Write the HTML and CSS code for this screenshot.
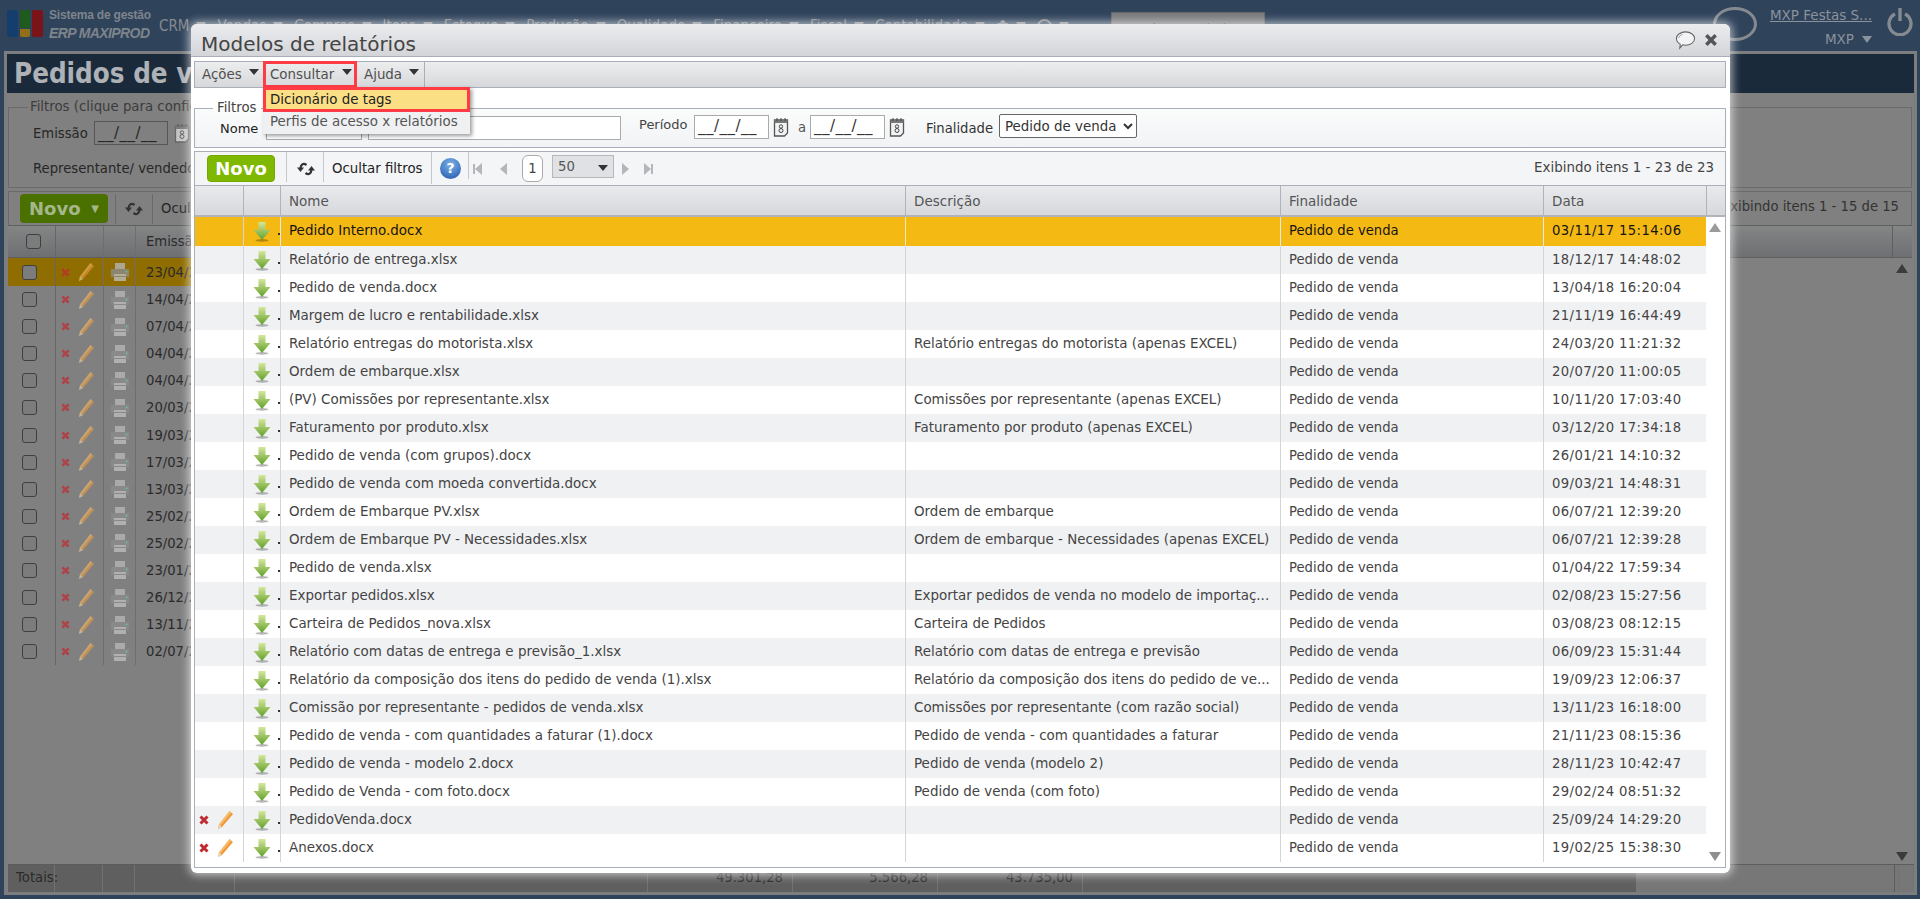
FILE: index.html
```html
<!DOCTYPE html>
<html lang="pt-BR">
<head>
<meta charset="utf-8">
<title>Modelos de relatórios</title>
<link rel="stylesheet" href="styles.css">
</head>
<body>
<svg class="defs" width="0" height="0" aria-hidden="true">
  <defs>
    <linearGradient id="ga" x1="0" y1="0" x2="0" y2="1"><stop offset="0" stop-color="#d5e79a"/><stop offset="1" stop-color="#62a02a"/></linearGradient>
    <symbol id="down" viewBox="0 0 18 20"><ellipse cx="9" cy="18.400" rx="6.500" ry="1.300" fill="#000" opacity=".28"/><path d="M5.500 0h7v8h5L9 18 .5 8h5z" fill="url(#ga)"/></symbol>
    <symbol id="del" viewBox="0 0 10 10"><path d="M1.500 1.500l7 7M8.500 1.500l-7 7" stroke="#c22a33" stroke-width="3" fill="none"/></symbol>
    <symbol id="pen" viewBox="0 0 18 20"><path d="M13.500 1l3.500 3L6 17l-4 2 1-4.500z" fill="#ee9a3a"/><path d="M13.500 1l1.700 1.500L4 16l-1-1.500z" fill="#f7bd6c"/><path d="M3 14.500L2 19l4-2z" fill="#e8d8b8"/></symbol>
    <symbol id="printer" viewBox="0 0 20 20"><path d="M5 1h10v6H5z" fill="#b5b5b5"/><path d="M1 7h18v8H1z" fill="#8c8c8c"/><path d="M4 12h12v7H4z" fill="#bdbdbd"/><path d="M4 14h12v1H4z" fill="#8c8c8c"/><circle cx="16.500" cy="9.500" r="1" fill="#6c9"/></symbol>
    <symbol id="sync" viewBox="0 0 18 16"><path d="M9.500 4C6.500 1.800 4 3.200 3.500 7" fill="none" stroke="#333" stroke-width="2.200"/><path d="M0 6.500h7L3.500 11z" fill="#333"/><path d="M8.500 12c3 2.200 5.500.8 6-3" fill="none" stroke="#333" stroke-width="2.200"/><path d="M11 9.500h7L14.500 5z" fill="#333"/></symbol>
    <symbol id="cal" viewBox="0 0 16 20"><path d="M1.500 3h13v13l-3 3h-10z" fill="#f2f3f4" stroke="#555" stroke-width="1.300"/><path d="M1.500 3h13v3h-13z" fill="#777"/><path d="M4 1v3M8 1v3M12 1v3" stroke="#444"/><circle cx="8" cy="9.500" r="1.700" fill="none" stroke="#444"/><circle cx="8" cy="13.500" r="2" fill="none" stroke="#444"/></symbol>
  </defs>
</svg>

<header class="topbar">
  <div class="logo">
    <span class="logo-bar navy"></span>
    <span class="logo-mid"><span class="logo-green"></span><span class="logo-yellow"></span></span>
    <span class="logo-bar red"></span>
  </div>
  <div class="brand"><span class="brand-a">Sistema de gestão</span><span class="brand-b">ERP MAXIPROD</span></div>
  <nav class="topnav">
    <span>CRM</span><i></i><span>Vendas</span><i></i><span>Compras</span><i></i><span>Itens</span><i></i><span>Estoque</span><i></i><span>Produção</span><i></i><span>Qualidade</span><i></i><span>Financeiro</span><i></i><span>Fiscal</span><i></i><span>Contabilidade</span><i></i><span class="star">✿</span><i></i><span class="circ"></span><i></i>
    <span class="topsearch">Pesquisar na ajuda</span>
  </nav>
  <span class="avatar"></span>
  <div class="user"><a>MXP Festas S...</a><span class="user-sub">MXP <i></i></span></div>
  <svg class="power" viewBox="0 0 26 28"><path d="M8 6a11 11 0 1 0 10 0" fill="none" stroke="#858a90" stroke-width="3.400"/><path d="M13 0v13" stroke="#858a90" stroke-width="3.400"/></svg>
</header>

<main class="page">
  <div class="page-title">Pedidos de vendas</div>
  <div class="page-filter">
    <div class="pf-legend">Filtros (clique para configurar)</div>
    <div class="pf-row"><span class="pf-lab">Emissão</span><span class="pf-input">__/__/__</span><svg class="pf-cal"><use href="#cal"/></svg></div>
    <div class="pf-rep">Representante/ vendedor</div>
  </div>
  <div class="page-tools">
    <span class="pt-new"><b>Novo</b><em>▼</em></span>
    <span class="pt-sep sa"></span><svg class="pt-sync"><use href="#sync"/></svg><span class="pt-sep sb"></span>
    <span class="pt-hide">Ocultar filtros</span>
    <span class="pt-count">Exibindo itens 1 - 15 de 15</span>
  </div>
  <div class="page-head">
    <span class="c1"><span class="box"></span></span><span class="c2"></span><span class="c3"></span><span class="c4">Emissão</span><span class="pscroll"></span>
  </div>
  <div class="page-body">
    <div class="page-rows">
      <div class="prow on"><span class="c1"><span class="box"></span></span><span class="c2"><svg class="ix"><use href="#del"/></svg><svg class="ip"><use href="#pen"/></svg></span><span class="c3"><svg class="ipr"><use href="#printer"/></svg></span><span class="c4">23/04/25</span></div>
      <div class="prow"><span class="c1"><span class="box"></span></span><span class="c2"><svg class="ix"><use href="#del"/></svg><svg class="ip"><use href="#pen"/></svg></span><span class="c3"><svg class="ipr"><use href="#printer"/></svg></span><span class="c4">14/04/25</span></div>
      <div class="prow"><span class="c1"><span class="box"></span></span><span class="c2"><svg class="ix"><use href="#del"/></svg><svg class="ip"><use href="#pen"/></svg></span><span class="c3"><svg class="ipr"><use href="#printer"/></svg></span><span class="c4">07/04/25</span></div>
      <div class="prow"><span class="c1"><span class="box"></span></span><span class="c2"><svg class="ix"><use href="#del"/></svg><svg class="ip"><use href="#pen"/></svg></span><span class="c3"><svg class="ipr"><use href="#printer"/></svg></span><span class="c4">04/04/25</span></div>
      <div class="prow"><span class="c1"><span class="box"></span></span><span class="c2"><svg class="ix"><use href="#del"/></svg><svg class="ip"><use href="#pen"/></svg></span><span class="c3"><svg class="ipr"><use href="#printer"/></svg></span><span class="c4">04/04/25</span></div>
      <div class="prow"><span class="c1"><span class="box"></span></span><span class="c2"><svg class="ix"><use href="#del"/></svg><svg class="ip"><use href="#pen"/></svg></span><span class="c3"><svg class="ipr"><use href="#printer"/></svg></span><span class="c4">20/03/25</span></div>
      <div class="prow"><span class="c1"><span class="box"></span></span><span class="c2"><svg class="ix"><use href="#del"/></svg><svg class="ip"><use href="#pen"/></svg></span><span class="c3"><svg class="ipr"><use href="#printer"/></svg></span><span class="c4">19/03/25</span></div>
      <div class="prow"><span class="c1"><span class="box"></span></span><span class="c2"><svg class="ix"><use href="#del"/></svg><svg class="ip"><use href="#pen"/></svg></span><span class="c3"><svg class="ipr"><use href="#printer"/></svg></span><span class="c4">17/03/25</span></div>
      <div class="prow"><span class="c1"><span class="box"></span></span><span class="c2"><svg class="ix"><use href="#del"/></svg><svg class="ip"><use href="#pen"/></svg></span><span class="c3"><svg class="ipr"><use href="#printer"/></svg></span><span class="c4">13/03/25</span></div>
      <div class="prow"><span class="c1"><span class="box"></span></span><span class="c2"><svg class="ix"><use href="#del"/></svg><svg class="ip"><use href="#pen"/></svg></span><span class="c3"><svg class="ipr"><use href="#printer"/></svg></span><span class="c4">25/02/25</span></div>
      <div class="prow"><span class="c1"><span class="box"></span></span><span class="c2"><svg class="ix"><use href="#del"/></svg><svg class="ip"><use href="#pen"/></svg></span><span class="c3"><svg class="ipr"><use href="#printer"/></svg></span><span class="c4">25/02/25</span></div>
      <div class="prow"><span class="c1"><span class="box"></span></span><span class="c2"><svg class="ix"><use href="#del"/></svg><svg class="ip"><use href="#pen"/></svg></span><span class="c3"><svg class="ipr"><use href="#printer"/></svg></span><span class="c4">23/01/25</span></div>
      <div class="prow"><span class="c1"><span class="box"></span></span><span class="c2"><svg class="ix"><use href="#del"/></svg><svg class="ip"><use href="#pen"/></svg></span><span class="c3"><svg class="ipr"><use href="#printer"/></svg></span><span class="c4">26/12/24</span></div>
      <div class="prow"><span class="c1"><span class="box"></span></span><span class="c2"><svg class="ix"><use href="#del"/></svg><svg class="ip"><use href="#pen"/></svg></span><span class="c3"><svg class="ipr"><use href="#printer"/></svg></span><span class="c4">13/11/24</span></div>
      <div class="prow"><span class="c1"><span class="box"></span></span><span class="c2"><svg class="ix"><use href="#del"/></svg><svg class="ip"><use href="#pen"/></svg></span><span class="c3"><svg class="ipr"><use href="#printer"/></svg></span><span class="c4">02/07/24</span></div>
    </div>
    <div class="pscroll-bar"><span class="up"></span><span class="dn"></span></div>
  </div>
  <div class="page-foot">
    <span class="t1">Totais:</span><span class="t2"></span><span class="t3"></span><span class="t4"></span><span class="t5"></span><span class="tn">49.301,28</span><span class="tn">5.566,28</span><span class="tn">43.735,00</span><span class="trest"></span><span class="tlast"></span>
  </div>
</main>

<section class="modal">
  <div class="m-title"><h1>Modelos de relatórios</h1>
    <svg class="m-chat" viewBox="0 0 22 20"><path d="M11 1.500c5 0 9.500 2.800 9.500 7s-4.500 7-9.500 7c-1 0-2-.1-3-.4L5 18.500l.5-4C3 13 1.500 11 1.500 8.500c0-4.200 4.500-7 9.500-7z" fill="#f3f4f5" stroke="#666" stroke-width="1.100"/><path d="M4 8c0-2 2-3.500 4-4" fill="none" stroke="#999"/></svg>
    <svg class="m-close" viewBox="0 0 12 12"><path d="M2 2l8 8M10 2l-8 8" stroke="#555" stroke-width="3"/></svg>
  </div>
  <div class="m-body">
    <div class="menubar">
      <div class="mi mi-a"><span>Ações</span><i></i></div>
      <div class="mi mi-c"><span>Consultar</span><i></i>
        <div class="dropdown">
          <div class="dd-on">Dicionário de tags</div>
          <div class="dd-off">Perfis de acesso x relatórios</div>
        </div>
      </div>
      <div class="mi mi-h"><span>Ajuda</span><i></i></div>
    </div>

    <fieldset class="filters">
      <legend>Filtros</legend>
      <div class="f-row">
        <label class="f-nome">Nome</label>
        <span class="inp inp1"></span>
        <span class="inp inp2"></span>
        <label class="f-per">Período</label>
        <span class="inp date">__/__/__</span><svg class="cal"><use href="#cal"/></svg>
        <label class="f-a">a</label>
        <span class="inp date">__/__/__</span><svg class="cal"><use href="#cal"/></svg>
        <label class="f-fin">Finalidade</label>
        <select class="f-sel"><option>Pedido de venda</option></select>
      </div>
    </fieldset>

    <div class="grid">
      <div class="g-tools">
        <button class="novo">Novo</button>
        <span class="sep s1"></span>
        <svg class="sync"><use href="#sync"/></svg>
        <span class="sep s2"></span>
        <span class="hide">Ocultar filtros</span>
        <span class="sep s3"></span>
        <span class="help">?</span>
        <span class="sep s4"></span>
        <span class="pg pg-first"></span><span class="pg pg-prev"></span>
        <span class="pgnum">1</span>
        <span class="pgsize">50<i></i></span>
        <span class="pg pg-next"></span><span class="pg pg-last"></span>
        <span class="count">Exibindo itens 1 - 23 de 23</span>
      </div>
      <div class="g-head">
        <span class="ca"></span><span class="cb"></span><span class="cn">Nome</span><span class="cd">Descrição</span><span class="cf">Finalidade</span><span class="cdt">Data</span><span class="cs"></span>
      </div>
      <div class="g-main">
        <div class="g-rows">
          <div class="r sel"><span class="ca"></span><span class="cb"><svg><use href="#down"/></svg><u></u></span><span class="cn">Pedido Interno.docx</span><span class="cd"></span><span class="cf">Pedido de venda</span><span class="cdt">03/11/17 15:14:06</span></div>
          <div class="r"><span class="ca"></span><span class="cb"><svg><use href="#down"/></svg><u></u></span><span class="cn">Relatório de entrega.xlsx</span><span class="cd"></span><span class="cf">Pedido de venda</span><span class="cdt">18/12/17 14:48:02</span></div>
          <div class="r"><span class="ca"></span><span class="cb"><svg><use href="#down"/></svg><u></u></span><span class="cn">Pedido de venda.docx</span><span class="cd"></span><span class="cf">Pedido de venda</span><span class="cdt">13/04/18 16:20:04</span></div>
          <div class="r"><span class="ca"></span><span class="cb"><svg><use href="#down"/></svg><u></u></span><span class="cn">Margem de lucro e rentabilidade.xlsx</span><span class="cd"></span><span class="cf">Pedido de venda</span><span class="cdt">21/11/19 16:44:49</span></div>
          <div class="r"><span class="ca"></span><span class="cb"><svg><use href="#down"/></svg><u></u></span><span class="cn">Relatório entregas do motorista.xlsx</span><span class="cd">Relatório entregas do motorista (apenas EXCEL)</span><span class="cf">Pedido de venda</span><span class="cdt">24/03/20 11:21:32</span></div>
          <div class="r"><span class="ca"></span><span class="cb"><svg><use href="#down"/></svg><u></u></span><span class="cn">Ordem de embarque.xlsx</span><span class="cd"></span><span class="cf">Pedido de venda</span><span class="cdt">20/07/20 11:00:05</span></div>
          <div class="r"><span class="ca"></span><span class="cb"><svg><use href="#down"/></svg><u></u></span><span class="cn">(PV) Comissões por representante.xlsx</span><span class="cd">Comissões por representante (apenas EXCEL)</span><span class="cf">Pedido de venda</span><span class="cdt">10/11/20 17:03:40</span></div>
          <div class="r"><span class="ca"></span><span class="cb"><svg><use href="#down"/></svg><u></u></span><span class="cn">Faturamento por produto.xlsx</span><span class="cd">Faturamento por produto (apenas EXCEL)</span><span class="cf">Pedido de venda</span><span class="cdt">03/12/20 17:34:18</span></div>
          <div class="r"><span class="ca"></span><span class="cb"><svg><use href="#down"/></svg><u></u></span><span class="cn">Pedido de venda (com grupos).docx</span><span class="cd"></span><span class="cf">Pedido de venda</span><span class="cdt">26/01/21 14:10:32</span></div>
          <div class="r"><span class="ca"></span><span class="cb"><svg><use href="#down"/></svg><u></u></span><span class="cn">Pedido de venda com moeda convertida.docx</span><span class="cd"></span><span class="cf">Pedido de venda</span><span class="cdt">09/03/21 14:48:31</span></div>
          <div class="r"><span class="ca"></span><span class="cb"><svg><use href="#down"/></svg><u></u></span><span class="cn">Ordem de Embarque PV.xlsx</span><span class="cd">Ordem de embarque</span><span class="cf">Pedido de venda</span><span class="cdt">06/07/21 12:39:20</span></div>
          <div class="r"><span class="ca"></span><span class="cb"><svg><use href="#down"/></svg><u></u></span><span class="cn">Ordem de Embarque PV - Necessidades.xlsx</span><span class="cd">Ordem de embarque - Necessidades (apenas EXCEL)</span><span class="cf">Pedido de venda</span><span class="cdt">06/07/21 12:39:28</span></div>
          <div class="r"><span class="ca"></span><span class="cb"><svg><use href="#down"/></svg><u></u></span><span class="cn">Pedido de venda.xlsx</span><span class="cd"></span><span class="cf">Pedido de venda</span><span class="cdt">01/04/22 17:59:34</span></div>
          <div class="r"><span class="ca"></span><span class="cb"><svg><use href="#down"/></svg><u></u></span><span class="cn">Exportar pedidos.xlsx</span><span class="cd">Exportar pedidos de venda no modelo de importaç...</span><span class="cf">Pedido de venda</span><span class="cdt">02/08/23 15:27:56</span></div>
          <div class="r"><span class="ca"></span><span class="cb"><svg><use href="#down"/></svg><u></u></span><span class="cn">Carteira de Pedidos_nova.xlsx</span><span class="cd">Carteira de Pedidos</span><span class="cf">Pedido de venda</span><span class="cdt">03/08/23 08:12:15</span></div>
          <div class="r"><span class="ca"></span><span class="cb"><svg><use href="#down"/></svg><u></u></span><span class="cn">Relatório com datas de entrega e previsão_1.xlsx</span><span class="cd">Relatório com datas de entrega e previsão</span><span class="cf">Pedido de venda</span><span class="cdt">06/09/23 15:31:44</span></div>
          <div class="r"><span class="ca"></span><span class="cb"><svg><use href="#down"/></svg><u></u></span><span class="cn">Relatório da composição dos itens do pedido de venda (1).xlsx</span><span class="cd">Relatório da composição dos itens do pedido de ve...</span><span class="cf">Pedido de venda</span><span class="cdt">19/09/23 12:06:37</span></div>
          <div class="r"><span class="ca"></span><span class="cb"><svg><use href="#down"/></svg><u></u></span><span class="cn">Comissão por representante - pedidos de venda.xlsx</span><span class="cd">Comissões por representante (com razão social)</span><span class="cf">Pedido de venda</span><span class="cdt">13/11/23 16:18:00</span></div>
          <div class="r"><span class="ca"></span><span class="cb"><svg><use href="#down"/></svg><u></u></span><span class="cn">Pedido de venda - com quantidades a faturar (1).docx</span><span class="cd">Pedido de venda - com quantidades a faturar</span><span class="cf">Pedido de venda</span><span class="cdt">21/11/23 08:15:36</span></div>
          <div class="r"><span class="ca"></span><span class="cb"><svg><use href="#down"/></svg><u></u></span><span class="cn">Pedido de venda - modelo 2.docx</span><span class="cd">Pedido de venda (modelo 2)</span><span class="cf">Pedido de venda</span><span class="cdt">28/11/23 10:42:47</span></div>
          <div class="r"><span class="ca"></span><span class="cb"><svg><use href="#down"/></svg><u></u></span><span class="cn">Pedido de Venda - com foto.docx</span><span class="cd">Pedido de venda (com foto)</span><span class="cf">Pedido de venda</span><span class="cdt">29/02/24 08:51:32</span></div>
          <div class="r"><span class="ca"><svg class="rx"><use href="#del"/></svg><svg class="rp"><use href="#pen"/></svg></span><span class="cb"><svg><use href="#down"/></svg><u></u></span><span class="cn">PedidoVenda.docx</span><span class="cd"></span><span class="cf">Pedido de venda</span><span class="cdt">25/09/24 14:29:20</span></div>
          <div class="r"><span class="ca"><svg class="rx"><use href="#del"/></svg><svg class="rp"><use href="#pen"/></svg></span><span class="cb"><svg><use href="#down"/></svg><u></u></span><span class="cn">Anexos.docx</span><span class="cd"></span><span class="cf">Pedido de venda</span><span class="cdt">19/02/25 15:38:30</span></div>
        </div>
        <div class="g-scroll"><span class="up"></span><span class="dn"></span></div>
      </div>
    </div>
  </div>
</section>
</body>
</html>
```
FILE: styles.css
```css
* { box-sizing: border-box; }
html, body { margin: 0; height: 899px; overflow: hidden; }
body {
  position: relative;
  background: #2f435b;
  font: 13.200px "DejaVu Sans", sans-serif;
  color: #444;
}
.defs { position: absolute; }
svg { display: block; }

/* top bar (dimmed) */
.topbar { height: 51px; display: flex; align-items: flex-start; position: relative; color: #858a90; }
.logo { display: flex; gap: 2px; margin: 10px 0 0 7px; height: 27px; width: 36px; flex: none; }
.logo-bar { width: 11px; height: 27px; border-radius: 2px; }
.logo-bar.navy { background: #143e6b; }
.logo-bar.red { background: #7a1418; }
.logo-mid { width: 10px; display: flex; flex-direction: column; gap: 1px; }
.logo-green { height: 18px; background: #1f5a1f; border-radius: 2px 2px 0 0; }
.logo-yellow { height: 8px; background: #927018; border-radius: 0 0 2px 2px; }
.brand { margin: 8px 0 0 6px; width: 110px; flex: none; display: flex; flex-direction: column; font-family: "Liberation Sans", sans-serif; color: #7e848c; }
.brand-a { font-size: 12px; font-weight: bold; line-height: 14px; white-space: nowrap; letter-spacing: -.2px; }
.brand-b { font-size: 14px; font-weight: bold; font-style: italic; line-height: 22px; white-space: nowrap; letter-spacing: -.6px; }
.topnav { display: flex; align-items: center; font-size: 15px; font-stretch: condensed; margin-top: 17px; height: 18px; white-space: nowrap; }
.topnav span { display: block; }
.topnav i { width: 0; height: 0; margin: 0 11px 0 7px; border-style: solid; border-width: 9px 5px 0; border-color: #858a90 transparent transparent; }
.topnav .star { font-size: 17px; }
.topnav .circ { width: 15px; height: 15px; border: 2px solid #858a90; border-radius: 50%; }
.topnav .topsearch { position: absolute; left: 1111px; top: 12px; width: 154px; height: 30px; background: #77797c; border: 1px solid #666; color: #3f3f3f; padding: 8px 3px 0; font-size: 14px; }
.avatar { position: absolute; left: 1713px; top: 7px; width: 44px; height: 34px; border: 3px solid #858a90; border-radius: 50%; }
.user { position: absolute; left: 1769px; top: 6px; width: 103px; display: flex; flex-direction: column; align-items: flex-end; font-size: 13.500px; color: #8b929c; }
.user a { text-decoration: underline; white-space: nowrap; line-height: 19px; }
.user-sub { display: flex; align-items: center; gap: 8px; margin-top: 6px; line-height: 17px; }
.user-sub i { width: 0; height: 0; border-style: solid; border-width: 7px 5px 0; border-color: #8b929c transparent transparent; }
.power { position: absolute; left: 1887px; top: 8px; width: 26px; height: 28px; }

/* page behind the modal */
.page { margin: 0 3px 0 4px; height: 844px; border: 3px solid #7b7d7f; background: #808080; display: flex; flex-direction: column; color: #262626; }
.page-title { height: 39px; flex: none; background: #1a2a3b; color: #aeb2b7; font-weight: bold; font-stretch: condensed; font-size: 27.500px; line-height: 38px; padding-left: 7px; white-space: nowrap; }
.page-filter { margin: 14px 2px 3px 1px; height: 81px; flex: none; border: 1px solid #6a6a6a; position: relative; padding: 13px 0 0 24px; }
.pf-legend { position: absolute; left: 19px; top: -9px; padding: 0 2px; background: #808080; font-size: 13.300px; color: #3c3c3c; white-space: nowrap; }
.pf-row { display: flex; align-items: center; height: 24px; }
.pf-lab { width: 61px; }
.pf-input { width: 74px; height: 24px; border: 1px solid #555; padding: 2px 3px; font-size: 15px; letter-spacing: .5px; white-space: nowrap; overflow: hidden; }
.pf-cal { width: 16px; height: 20px; margin-left: 6px; opacity: .6; }
.pf-rep { margin-top: 16px; white-space: nowrap; }
.page-tools { height: 35px; flex: none; margin: 0 2px 0 1px; border: 1px solid #6a6a6a; border-bottom-color: #5f5f5f; display: flex; align-items: center; padding-left: 11px; position: relative; }
.pt-new { width: 88px; height: 29px; background: #4a7000; border-radius: 4px; display: flex; align-items: center; justify-content: space-between; padding: 0 9px; color: #a5b78a; }
.pt-new b { font-size: 18px; }
.pt-new em { font-style: normal; font-size: 10px; }
.pt-sep { width: 1px; height: 30px; background: #6a6a6a; flex: none; }
.pt-sep.sa { margin: 0 9px 0 7px; }
.pt-sep.sb { margin: 0 8px 0 9px; }
.pt-sync { width: 18px; height: 16px; flex: none; }
.pt-hide { white-space: nowrap; }
.pt-count { position: absolute; right: 12px; top: 7px; color: #333; white-space: nowrap; }
.page-head { height: 32px; flex: none; margin: 0 2px 0 1px; display: flex; align-items: center; background: linear-gradient(#848585, #6d6f72); border-bottom: 1px solid #5f5f5f; }
.c1 { width: 48px; flex: none; height: 100%; border-right: 1px solid #666; display: flex; align-items: center; padding-left: 14px; }
.page-head .c1 { padding-left: 18px; }
.c2 { width: 48px; flex: none; height: 100%; border-right: 1px solid #6e6e6e; display: flex; align-items: center; gap: 7px; padding-left: 5px; }
.c3 { width: 32px; flex: none; height: 100%; border-right: 1px solid #6e6e6e; display: flex; align-items: center; justify-content: center; }
.c4 { padding-left: 10px; white-space: nowrap; flex: 1; color: #2a2a2a; }
.pscroll { width: 20px; height: 100%; border-left: 1px solid #5f5f5f; }
.box { display: block; width: 15px; height: 15px; border: 1px solid #3f3f3f; border-radius: 3px; background: #7c7c7c; }
.page-body { flex: 1; display: flex; margin-left: 1px; min-height: 0; }
.page-rows { flex: 1; }
.prow { height: 27.100px; width: 400px; display: flex; align-items: center; }
.prow.on { background: #8f6d00; height: 28px; }
.ix { width: 9px; height: 9px; opacity: .7; }
.ip { width: 18px; height: 20px; opacity: .6; }
.ipr { width: 20px; height: 20px; opacity: .8; }
.pscroll-bar { width: 20px; position: relative; }
.pscroll-bar .up, .pscroll-bar .dn { position: absolute; left: 2px; width: 0; height: 0; border-style: solid; border-color: transparent; }
.pscroll-bar .up { top: 6px; border-width: 0 6px 9px; border-bottom-color: #3b3b3b; }
.pscroll-bar .dn { bottom: 3px; border-width: 9px 6px 0; border-top-color: #3b3b3b; }
.page-foot { height: 28px; flex: none; margin-left: 1px; display: flex; background: linear-gradient(90deg, #5f5f5f 0, #5f5f5f 1628px, #777 1628px); border-top: 1px solid #5c5c5c; align-items: stretch; color: #2b2b2b; position: relative; }
.page-foot span { border-right: 1px solid #727272; flex: none; }
.t1 { width: 47px; padding: 5px 0 0 8px; white-space: nowrap; overflow: visible; }
.t2 { width: 48px; } .t3 { width: 32px; } .t4 { width: 100px; } .t5 { width: 413px; }
.tn { width: 145px; text-align: right; padding: 0 9px 0 0; line-height: 26px; }
.trest { width: 816px; }
.tlast { width: 20px; position: absolute; right: 0; height: 100%; border-left: 1px solid #5c5c5c; }

/* modal */
.modal { position: absolute; left: 191px; top: 24px; width: 1539px; height: 849px; background: #fff; border-radius: 6px; box-shadow: 0 0 10px 2px rgba(255,255,255,.65); }
.m-title { height: 33px; background: linear-gradient(#ebecee, #d3d5d9); border-bottom: 1px solid #a9afb8; border-radius: 6px 6px 0 0; display: flex; align-items: center; padding: 0 12px 0 10px; }
.m-title h1 { margin: 8px 0 0; font-size: 20px; font-weight: normal; color: #444; flex: 1; }
.m-chat { width: 21px; height: 20px; margin-right: 8px; }
.m-close { width: 14px; height: 14px; }
.m-body { padding: 4px 4px 5px 3px; height: 816px; display: flex; flex-direction: column; }

.menubar { height: 27px; flex: none; display: flex; border: 1px solid #a9afb8; background: linear-gradient(#eceded, #d6d8db); position: relative; }
.mi { display: flex; align-items: center; justify-content: space-between; font-size: 13.400px; color: #4f4f4f; position: relative; }
.mi i { width: 0; height: 0; border-style: solid; border-width: 6px 5px 0; border-color: #333 transparent transparent; margin-top: -5px; }
.mi-a { width: 68px; padding: 0 4px 0 7px; }
.mi-c { width: 94px; padding: 0 5px 0 7px; outline: 3px solid #ff3c46; outline-offset: -3px; margin: -1px 0; height: 27px; }
.mi-h { width: 68px; padding: 0 5px 0 7px; border-right: 1px solid #a9afb8; }
.dropdown { position: absolute; left: 0; top: 26px; width: 207px; z-index: 5; box-shadow: 2px 2px 4px rgba(0,0,0,.4); background: #eff0f2; font-size: 13.400px; }
.dd-on { height: 25px; background: #fbdf85; border: 3px solid #ff3c46; padding-left: 4px; line-height: 19px; color: #222; white-space: nowrap; }
.dd-off { height: 22px; padding-left: 7px; line-height: 20px; white-space: nowrap; color: #555; }

.filters { margin: 13px 0 0; padding: 0; height: 47px; flex: none; border: 1px solid #a9afb8; background: linear-gradient(#fafbfb, #f2f3f5); min-width: 0; }
.filters legend { margin-left: 18px; padding: 0 4px; font-size: 13.300px; color: #444; line-height: 14px; }
.f-row { display: flex; align-items: center; height: 28px; margin-top: -1px; color: #333; }
.f-nome { margin-left: 25px; width: 46px; color: #222; font-size: 13px; }
.inp { display: block; height: 24px; border: 1px solid #aaa; background: #fff; flex: none; }
.inp1 { width: 96px; }
.inp2 { width: 253px; margin-left: 6px; }
.f-per { margin: -8px 0 0 18px; width: 55px; color: #444; font-size: 13px; }
.date { width: 75px; font-size: 15px; letter-spacing: .5px; padding: 1px 3px; color: #333; margin-top: -2px; white-space: nowrap; overflow: hidden; }
.cal { width: 16px; height: 20px; margin: -2px 5px 0 4px; }
.f-a { width: 12px; margin: -2px 0 0 4px; color: #555; }
.f-fin { margin-left: 16px; width: 73px; color: #333; }
.f-sel { width: 138px; height: 24px; font: inherit; font-size: 13.400px; color: #333; background: #fff; border: 1px solid #666; border-radius: 2px; margin-top: -4px; padding: 0 0 0 1px; }

.grid { margin-top: 3px; flex: 1; border: 1px solid #a9afb8; display: flex; flex-direction: column; min-height: 0; }
.g-tools { height: 34px; flex: none; display: flex; align-items: center; background: #f4f5f6; border-bottom: 1px solid #a9afb8; padding-left: 12px; position: relative; }
.novo { width: 68px; height: 27px; background: #7fb800; color: #fff; border: 1px solid #74a800; border-radius: 4px; font: inherit; font-weight: bold; font-size: 18px; padding: 0; }
.sep { display: block; width: 1px; background: #c5c8cc; align-self: flex-start; flex: none; }
.s1 { height: 30px; margin-left: 11px; }
.sync { width: 18px; height: 16px; margin-left: 10px; flex: none; }
.s2 { height: 30px; margin-left: 8px; }
.hide { margin-left: 8px; color: #222; white-space: nowrap; width: 99px; flex: none; font-size: 13.300px; }
.s3 { height: 32px; }
.help { width: 21px; height: 21px; margin-left: 8px; flex: none; border-radius: 50%; background: radial-gradient(circle at 50% 30%, #7eb2ea, #1d55a8); color: #fff; font-weight: bold; font-size: 14px; line-height: 21px; text-align: center; }
.s4 { height: 27px; margin-left: 7px; }
.pg { display: block; width: 0; height: 0; border-style: solid; border-color: transparent; position: relative; flex: none; }
.pg-first { margin-left: 6px; border-width: 6px 7px 6px 0; border-right-color: #b3b6ba; box-shadow: -3px 0 0 -1px #b3b6ba; }
.pg-prev { margin-left: 18px; border-width: 6px 7px 6px 0; border-right-color: #b3b6ba; }
.pgnum { width: 21px; height: 27px; margin-left: 15px; flex: none; border: 1px solid #aaa; border-radius: 6px; background: #fff; text-align: center; line-height: 25px; color: #444; }
.pgsize { width: 62px; height: 23px; flex: none; margin: -4px 0 0 9px; background: #dfe1e4; border: 1px solid #b5b8bc; display: flex; align-items: center; justify-content: space-between; padding: 0 5px; color: #555; }
.pgsize i { width: 0; height: 0; border-style: solid; border-width: 6px 5px 0; border-color: #333 transparent transparent; margin-top: 3px; }
.pg-next { margin-left: 8px; border-width: 6px 0 6px 7px; border-left-color: #b3b6ba; }
.pg-last { margin-left: 15px; border-width: 6px 0 6px 7px; border-left-color: #b3b6ba; box-shadow: 3px 0 0 -1px #b3b6ba; }
.count { position: absolute; right: 11px; top: 8px; color: #444; white-space: nowrap; font-size: 13.400px; }

.g-head { height: 31px; flex: none; display: flex; background: linear-gradient(#e9eaec, #d6d8dc); border-bottom: 2px solid #b0b4ba; color: #555; line-height: 31px; font-size: 13.500px; }
.ca { width: 49px; flex: none; position: relative; border-right: 1px solid #b0b4ba; }
.cb { width: 37px; flex: none; position: relative; border-right: 1px solid #b0b4ba; }
.cn { width: 625px; flex: none; padding-left: 8px; border-right: 1px solid #b0b4ba; white-space: nowrap; }
.cd { width: 375px; flex: none; padding-left: 8px; border-right: 1px solid #b0b4ba; white-space: nowrap; }
.cf { width: 263px; flex: none; padding-left: 8px; border-right: 1px solid #b0b4ba; white-space: nowrap; }
.cdt { width: 163px; flex: none; padding-left: 8px; border-right: 1px solid #b0b4ba; white-space: nowrap; }
.cs { flex: 1; }

.g-main { flex: 1; display: flex; min-height: 0; position: relative; }
.g-rows { width: 1511px; flex: none; }
.r { height: 28px; display: flex; line-height: 27px; color: #444; background: #fff; }
.r .cn, .r .cd { font-size: 13.450px; }
.r:nth-child(even) { background: #f0f1f3; }
.r.sel { height: 29px; background: #f5b914; color: #151515; }
.r .ca, .r .cb, .r .cn, .r .cd, .r .cf, .r .cdt { border-right-color: #d3d5d8; }
.r.sel .cb, .r.sel .cd, .r.sel .cf { border-right-color: #e8eaec; }
.r.sel .cn { border-right-color: #f6e9b8; }
.r .cdt { border-right: 0; width: 162px; letter-spacing: .4px; }
.r .cb svg { position: absolute; left: 9px; top: 5px; width: 18px; height: 20px; }
.r .cb u { position: absolute; right: 0; top: 16px; width: 2px; height: 2px; background: #333; }
.rx { position: absolute; left: 4px; top: 9px; width: 10px; height: 10px; }
.rp { position: absolute; left: 21px; top: 4px; width: 18px; height: 20px; }
.g-scroll { flex: 1; position: relative; }
.g-scroll .up, .g-scroll .dn { position: absolute; left: 3px; width: 0; height: 0; border-style: solid; border-color: transparent; }
.g-scroll .up { top: 6px; border-width: 0 6px 9px; border-bottom-color: #9b9b9b; }
.g-scroll .dn { bottom: 6px; border-width: 9px 6px 0; border-top-color: #8f8f8f; }
```
